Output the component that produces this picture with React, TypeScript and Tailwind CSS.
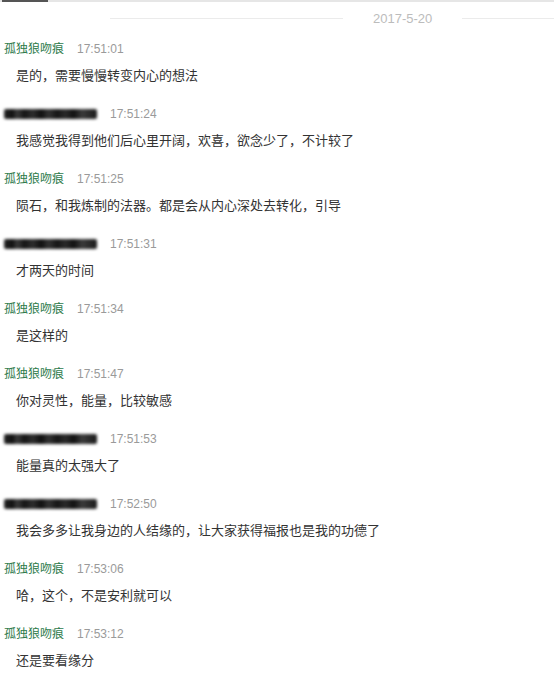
import React from 'react';

type Msg = {
  name: string | null;
  time: string;
  text: string;
};

const messages: Msg[] = [
  { name: '孤独狼吻痕', time: '17:51:01', text: '是的，需要慢慢转变内心的想法' },
  { name: null, time: '17:51:24', text: '我感觉我得到他们后心里开阔，欢喜，欲念少了，不计较了' },
  { name: '孤独狼吻痕', time: '17:51:25', text: '陨石，和我炼制的法器。都是会从内心深处去转化，引导' },
  { name: null, time: '17:51:31', text: '才两天的时间' },
  { name: '孤独狼吻痕', time: '17:51:34', text: '是这样的' },
  { name: '孤独狼吻痕', time: '17:51:47', text: '你对灵性，能量，比较敏感' },
  { name: null, time: '17:51:53', text: '能量真的太强大了' },
  { name: null, time: '17:52:50', text: '我会多多让我身边的人结缘的，让大家获得福报也是我的功德了' },
  { name: '孤独狼吻痕', time: '17:53:06', text: '哈，这个，不是安利就可以' },
  { name: '孤独狼吻痕', time: '17:53:12', text: '还是要看缘分' },
];

// blurred-out nickname, as in the screenshot
const Blurred = () => (
  <div className="w-[93px] h-[16px] flex items-center">
    <div className="w-[93px] h-[10px] rounded-[2px] blur-[1.4px] bg-[linear-gradient(90deg,#222_0%,#111_9%,#3a3a3a_14%,#151515_22%,#2e2e2e_31%,#0f0f0f_40%,#333_48%,#161616_57%,#2a2a2a_66%,#111_75%,#3b3b3b_84%,#1a1a1a_100%)]" />
  </div>
);

export default function App() {
  return (
    <div
      className="w-[554px] h-[680px] bg-white overflow-hidden"
      style={{ fontFamily: '"Liberation Sans", "Noto Sans CJK SC", sans-serif' }}
    >
      {/* top tab strip */}
      <div className="h-[2px] bg-[#e6e6e6] flex">
        <div className="ml-[2px] w-[46px] h-[2px] bg-[#555]" />
      </div>

      {/* date divider */}
      <div className="h-[33px] flex items-center pl-[110px]">
        <div className="w-[233px] h-px bg-[#ebebeb]" />
        <div className="px-[30px] text-[13px] leading-[16px] text-[#bcbcbc] whitespace-nowrap">2017-5-20</div>
        <div className="flex-1 h-px bg-[#ebebeb]" />
      </div>

      <div className="flex flex-col mt-[6px]">
        {messages.map((m, i) => (
          <div key={i} className="h-[65px] flex flex-col">
            <div className="h-[16px] flex items-center pl-[4px]">
              {m.name ? (
                <span className="text-[12px] leading-[16px] text-[#2d7a4b] w-[73px]">{m.name}</span>
              ) : (
                <div className="w-[106px]">
                  <Blurred />
                </div>
              )}
              <span className="text-[12px] leading-[16px] text-[#9a9a9a]">{m.time}</span>
            </div>
            <div className="mt-[9px] pl-[16px] text-[13px] leading-[20px] text-[#333] whitespace-nowrap">
              {m.text}
            </div>
          </div>
        ))}
      </div>
    </div>
  );
}
